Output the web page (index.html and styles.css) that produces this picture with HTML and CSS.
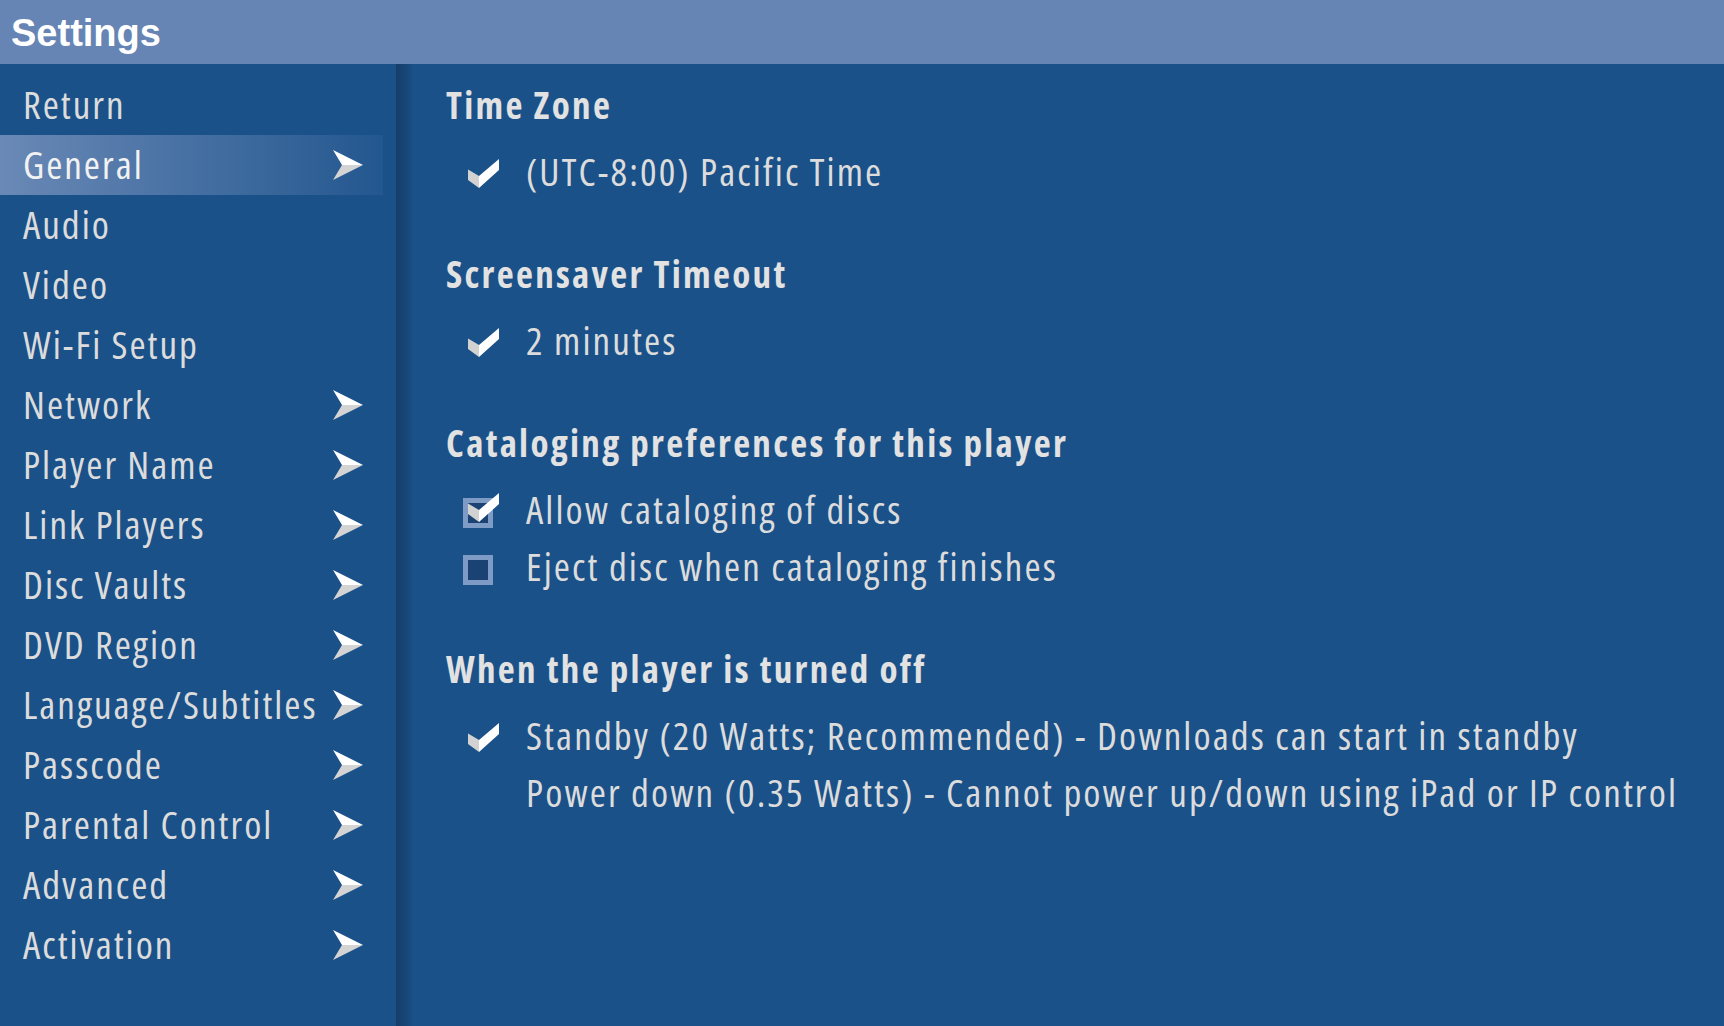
FILE: index.html
```html
<!DOCTYPE html>
<html>
<head>
    <title>Settings</title>
    <link rel="stylesheet" href="styles.css">
</head>
<body>
    <div class="topbar">Settings</div>
    <div class="layout">
        <div class="sidebar">
            <div class="menu-item">Return</div>
            <div class="menu-item active">General <svg class="arrow" viewBox="0 0 30 30"><polygon points="0,0 30,15 9,15" fill="#fff"/><polygon points="9,15 30,15 0,30" fill="#d4d4d4"/></svg></div>
            <div class="menu-item">Audio</div>
            <div class="menu-item">Video</div>
            <div class="menu-item">Wi-Fi Setup</div>
            <div class="menu-item">Network <svg class="arrow" viewBox="0 0 30 30"><polygon points="0,0 30,15 9,15" fill="#fff"/><polygon points="9,15 30,15 0,30" fill="#d4d4d4"/></svg></div>
            <div class="menu-item">Player Name <svg class="arrow" viewBox="0 0 30 30"><polygon points="0,0 30,15 9,15" fill="#fff"/><polygon points="9,15 30,15 0,30" fill="#d4d4d4"/></svg></div>
            <div class="menu-item">Link Players <svg class="arrow" viewBox="0 0 30 30"><polygon points="0,0 30,15 9,15" fill="#fff"/><polygon points="9,15 30,15 0,30" fill="#d4d4d4"/></svg></div>
            <div class="menu-item">Disc Vaults <svg class="arrow" viewBox="0 0 30 30"><polygon points="0,0 30,15 9,15" fill="#fff"/><polygon points="9,15 30,15 0,30" fill="#d4d4d4"/></svg></div>
            <div class="menu-item">DVD Region <svg class="arrow" viewBox="0 0 30 30"><polygon points="0,0 30,15 9,15" fill="#fff"/><polygon points="9,15 30,15 0,30" fill="#d4d4d4"/></svg></div>
            <div class="menu-item">Language/Subtitles <svg class="arrow" viewBox="0 0 30 30"><polygon points="0,0 30,15 9,15" fill="#fff"/><polygon points="9,15 30,15 0,30" fill="#d4d4d4"/></svg></div>
            <div class="menu-item">Passcode <svg class="arrow" viewBox="0 0 30 30"><polygon points="0,0 30,15 9,15" fill="#fff"/><polygon points="9,15 30,15 0,30" fill="#d4d4d4"/></svg></div>
            <div class="menu-item">Parental Control <svg class="arrow" viewBox="0 0 30 30"><polygon points="0,0 30,15 9,15" fill="#fff"/><polygon points="9,15 30,15 0,30" fill="#d4d4d4"/></svg></div>
            <div class="menu-item">Advanced <svg class="arrow" viewBox="0 0 30 30"><polygon points="0,0 30,15 9,15" fill="#fff"/><polygon points="9,15 30,15 0,30" fill="#d4d4d4"/></svg></div>
            <div class="menu-item">Activation <svg class="arrow" viewBox="0 0 30 30"><polygon points="0,0 30,15 9,15" fill="#fff"/><polygon points="9,15 30,15 0,30" fill="#d4d4d4"/></svg></div>
        </div>
        <div class="content">
            <div class="section">
                <div class="heading">Time Zone</div>
                <div class="option">
                    <span class="mark"><svg class="check" viewBox="0 0 31 29"><polygon points="0,10.5 11,17 11,29 0,21" fill="#d2d2d2"/><polygon points="11,17 31,0 31,11 11,29" fill="#fff"/></svg></span>
                    <span class="label">(UTC-8:00) Pacific Time</span>
                </div>
            </div>
            <div class="section">
                <div class="heading">Screensaver Timeout</div>
                <div class="option">
                    <span class="mark"><svg class="check" viewBox="0 0 31 29"><polygon points="0,10.5 11,17 11,29 0,21" fill="#d2d2d2"/><polygon points="11,17 31,0 31,11 11,29" fill="#fff"/></svg></span>
                    <span class="label">2 minutes</span>
                </div>
            </div>
            <div class="section">
                <div class="heading">Cataloging preferences for this player</div>
                <div class="option">
                    <span class="mark"><span class="box"></span><svg class="check boxed" viewBox="0 0 31 29"><polygon points="0,10.5 11,17 11,29 0,21" fill="#d2d2d2"/><polygon points="11,17 31,0 31,11 11,29" fill="#fff"/></svg></span>
                    <span class="label">Allow cataloging of discs</span>
                </div>
                <div class="option">
                    <span class="mark"><span class="box"></span></span>
                    <span class="label">Eject disc when cataloging finishes</span>
                </div>
            </div>
            <div class="section">
                <div class="heading">When the player is turned off</div>
                <div class="option">
                    <span class="mark"><svg class="check" viewBox="0 0 31 29"><polygon points="0,10.5 11,17 11,29 0,21" fill="#d2d2d2"/><polygon points="11,17 31,0 31,11 11,29" fill="#fff"/></svg></span>
                    <span class="label">Standby (20 Watts; Recommended) - Downloads can start in standby</span>
                </div>
                <div class="option">
                    <span class="mark"></span>
                    <span class="label">Power down (0.35 Watts) - Cannot power up/down using iPad or IP control</span>
                </div>
            </div>
        </div>
    </div>
</body>
</html>
```

FILE: styles.css
```css
body, html {
    margin: 0;
    padding: 0;
    height: 100%;
}
body {
    display: flex;
    flex-direction: column;
    overflow: hidden;
    background-color: #1b5189;
    color: #dcdcdc;
    font-family: "Open Sans", Roboto, sans-serif;
    font-stretch: 75%;
}
.topbar {
    flex: none;
    height: 62px;
    padding: 2px 0 0 11px;
    background-color: #6685b4;
    color: #fff;
    font: bold 38px/62px "Liberation Sans", Arial, sans-serif;
}
.layout {
    flex: 1;
    display: flex;
}
.sidebar {
    flex: none;
    width: 396px;
    padding-top: 11px;
}
.menu-item {
    height: 56px;
    display: flex;
    align-items: center;
    justify-content: space-between;
    padding: 0 33px 4px 23px;
    font-size: 39px;
    letter-spacing: 2px;
}
.menu-item.active {
    background: linear-gradient(90deg, #6a89b6 0, #23578f 383px, transparent 383px);
    color: #f2f2f2;
}
.arrow {
    width: 30px;
    height: 30px;
    flex: none;
    margin-top: 4px;
}
.content {
    flex: 1;
    padding: 19px 0 0 50px;
    background: linear-gradient(90deg, rgba(0,0,0,.22) 0, rgba(0,0,0,.14) 10px, rgba(0,0,0,0) 18px);
}
.section {
    margin-bottom: 51px;
}
.heading {
    height: 44px;
    line-height: 44px;
    margin-bottom: 17px;
    font-size: 37px;
    font-weight: bold;
    letter-spacing: 2.3px;
    color: #e2e2e2;
}
.option {
    height: 53px;
    display: flex;
    align-items: center;
    padding: 0 0 4px 17px;
    font-size: 39px;
    letter-spacing: 2.1px;
}
.mark {
    position: relative;
    flex: none;
    width: 36px;
    height: 36px;
    margin-top: 4px;
}
.label {
    margin-left: 27px;
    white-space: nowrap;
}
.check {
    position: absolute;
    left: 5px;
    top: 4px;
    width: 31px;
    height: 29px;
}
.check.boxed {
    top: 0;
}
.box {
    position: absolute;
    left: 0;
    top: 5px;
    width: 20px;
    height: 20px;
    border: 5px solid #7e9bc6;
    background-color: #1a4272;
}
```
